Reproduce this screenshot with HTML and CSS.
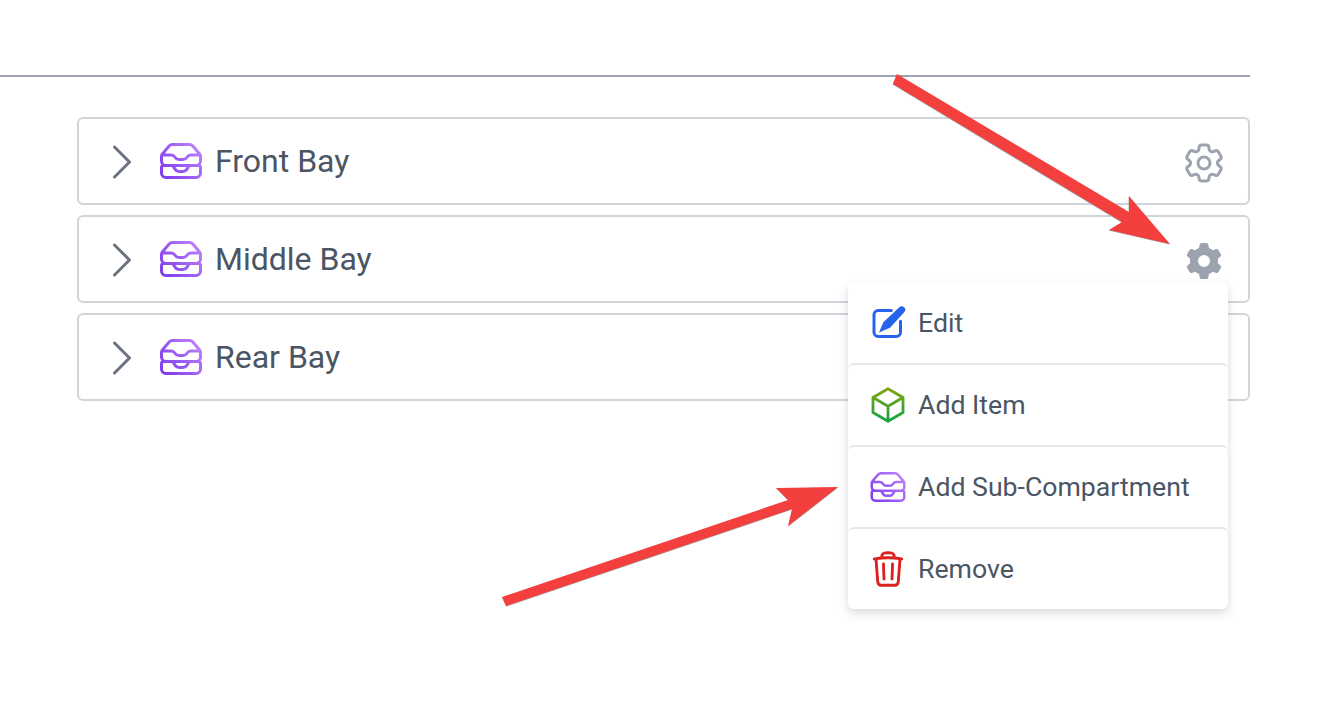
FILE: index.html
```html
<!DOCTYPE html>
<html lang="en">

<head>
    <meta charset="UTF-8">
    <meta name="viewport" content="width=device-width, initial-scale=1.0">
    <title>Compartments</title>
    <link rel="stylesheet" href="styles.css">
</head>

<body>
    <svg width="0" height="0" class="defs">
        <defs>
            <linearGradient id="purple2" gradientUnits="userSpaceOnUse" x1="2" y1="20" x2="22" y2="4">
                <stop offset="0" stop-color="#7c3aed"></stop>
                <stop offset="1" stop-color="#c084fc"></stop>
            </linearGradient>
            <linearGradient id="green" gradientUnits="userSpaceOnUse" x1="12" y1="2" x2="12" y2="22">
                <stop offset="0" stop-color="#84a50c"></stop>
                <stop offset="1" stop-color="#16a34a"></stop>
            </linearGradient>
            <symbol id="chevron" viewBox="0 0 24 24">
                <path fill="none" stroke="currentColor" stroke-width="1.5" stroke-linecap="round" stroke-linejoin="round" d="M8.25 4.5l7.5 7.5-7.5 7.5"></path>
            </symbol>
            <symbol id="inbox" viewBox="0 0 24 24">
                <path fill="none" stroke="url(#purple2)" stroke-width="1.5" stroke-linecap="round" stroke-linejoin="round" d="M7.875 14.25l1.214 1.942a2.25 2.25 0 001.908 1.058h2.006c.776 0 1.497-.4 1.908-1.058l1.214-1.942M2.41 9h4.636a2.25 2.25 0 011.872 1.002l.164.246a2.25 2.25 0 001.872 1.002h2.092a2.25 2.25 0 001.872-1.002l.164-.246A2.25 2.25 0 0116.954 9h4.636M2.41 9a2.25 2.25 0 00-.16.832V12a2.25 2.25 0 002.25 2.25h15A2.25 2.25 0 0021.75 12V9.832c0-.287-.055-.57-.16-.832M2.41 9a2.25 2.25 0 01.382-.632l3.285-3.832a2.25 2.25 0 011.708-.786h8.43c.657 0 1.281.287 1.709.786l3.284 3.832c.163.19.291.404.382.632M4.5 20.25h15A2.25 2.25 0 0021.75 18v-2.625c0-.621-.504-1.125-1.125-1.125H3.375c-.621 0-1.125.504-1.125 1.125V18a2.25 2.25 0 002.25 2.25z"></path>
            </symbol>
            <symbol id="cog" viewBox="0 0 24 24">
                <g fill="none" stroke="currentColor" stroke-width="1.5" stroke-linecap="round" stroke-linejoin="round">
                    <path d="M9.594 3.94c.09-.542.56-.94 1.11-.94h2.593c.55 0 1.02.398 1.11.94l.213 1.281c.063.374.313.686.645.87.074.04.147.083.22.127.324.196.72.257 1.075.124l1.217-.456a1.125 1.125 0 011.37.49l1.296 2.247a1.125 1.125 0 01-.26 1.431l-1.003.827c-.293.24-.438.613-.431.992a6.759 6.759 0 010 .255c-.007.378.138.75.43.99l1.005.828c.424.35.534.954.26 1.43l-1.298 2.247a1.125 1.125 0 01-1.369.491l-1.217-.456c-.355-.133-.75-.072-1.076.124a6.57 6.57 0 01-.22.128c-.331.183-.581.495-.644.869l-.213 1.28c-.09.543-.56.941-1.11.941h-2.594c-.55 0-1.02-.398-1.11-.94l-.213-1.281c-.062-.374-.312-.686-.644-.87a6.52 6.52 0 01-.22-.127c-.325-.196-.72-.257-1.076-.124l-1.217.456a1.125 1.125 0 01-1.369-.49l-1.297-2.247a1.125 1.125 0 01.26-1.431l1.004-.827c.292-.24.437-.613.43-.992a6.932 6.932 0 010-.255c.007-.378-.138-.75-.43-.99l-1.004-.828a1.125 1.125 0 01-.26-1.43l1.297-2.247a1.125 1.125 0 011.37-.491l1.216.456c.356.133.751.072 1.076-.124.072-.044.146-.087.22-.128.332-.183.582-.495.644-.869l.214-1.281z"></path>
                    <path d="M15 12a3 3 0 11-6 0 3 3 0 016 0z"></path>
                </g>
            </symbol>
            <symbol id="cog-solid" viewBox="0 0 20 20">
                <path fill="currentColor" fill-rule="evenodd" clip-rule="evenodd" d="M7.84 1.804A1 1 0 018.82 1h2.36a1 1 0 01.98.804l.331 1.652a6.993 6.993 0 011.929 1.115l1.598-.54a1 1 0 011.186.447l1.18 2.044a1 1 0 01-.205 1.251l-1.267 1.113a7.047 7.047 0 010 2.228l1.267 1.113a1 1 0 01.206 1.25l-1.18 2.045a1 1 0 01-1.187.447l-1.598-.54a6.993 6.993 0 01-1.929 1.115l-.33 1.652a1 1 0 01-.98.804H8.82a1 1 0 01-.98-.804l-.331-1.652a6.993 6.993 0 01-1.929-1.115l-1.598.54a1 1 0 01-1.186-.447l-1.18-2.044a1 1 0 01.205-1.251l1.267-1.114a7.05 7.05 0 010-2.227L1.821 7.773a1 1 0 01-.206-1.25l1.18-2.045a1 1 0 011.187-.447l1.598.54A6.993 6.993 0 017.51 3.456l.33-1.652zM10 13a3 3 0 100-6 3 3 0 000 6z"></path>
            </symbol>
        </defs>
    </svg>

    <div class="page">
        <div class="top-rule"></div>

        <ul class="bays">
            <li class="bay">
                <svg class="icon-lg chevron"><use href="#chevron"></use></svg>
                <svg class="icon-lg inbox"><use href="#inbox"></use></svg>
                <span class="bay-name">Front Bay</span>
                <span class="gear"><svg class="icon-lg"><use href="#cog"></use></svg></span>
            </li>
            <li class="bay">
                <svg class="icon-lg chevron"><use href="#chevron"></use></svg>
                <svg class="icon-lg inbox"><use href="#inbox"></use></svg>
                <span class="bay-name">Middle Bay</span>
                <span class="gear"><svg class="icon-solid"><use href="#cog-solid"></use></svg></span>
            </li>
            <li class="bay">
                <svg class="icon-lg chevron"><use href="#chevron"></use></svg>
                <svg class="icon-lg inbox"><use href="#inbox"></use></svg>
                <span class="bay-name">Rear Bay</span>
            </li>
        </ul>
    </div>

    <!-- dropdown of the Middle Bay gear -->
    <div class="menu">
        <div class="menu-item">
            <svg class="icon-md" viewBox="0 0 24 24">
                <path fill="none" stroke="#2563eb" stroke-width="1.8" stroke-linecap="round" d="M19.5 11V17.6a2.5 2.5 0 01-2.5 2.5H6.1a2.5 2.5 0 01-2.5-2.5V7a2.5 2.5 0 012.5-2.5H14"></path>
                <path fill="#2563eb" d="M6.6 17.7L9.2 11.6L18.8 2.6a2 2 0 012.9 2.9L13.2 14.9z"></path>
            </svg>
            <span>Edit</span>
        </div>
        <div class="menu-item">
            <svg class="icon-md" viewBox="0 0 24 24">
                <path fill="none" stroke="url(#green)" stroke-width="1.7" stroke-linecap="round" stroke-linejoin="round" d="M21 7.5l-9-5.25L3 7.5m18 0l-9 5.25m9-5.25v9l-9 5.25M3 7.5l9 5.25M3 7.5v9l9 5.25m0-9v9"></path>
            </svg>
            <span>Add Item</span>
        </div>
        <div class="menu-item">
            <svg class="icon-md"><use href="#inbox"></use></svg>
            <span>Add Sub-Compartment</span>
        </div>
        <div class="menu-item">
            <svg class="icon-md" viewBox="0 0 24 24">
                <path fill="none" stroke="#dc1f1f" stroke-width="1.7" stroke-linecap="round" stroke-linejoin="round" d="M14.74 9l-.346 9m-4.788 0L9.26 9m9.968-3.21c.342.052.682.107 1.022.166m-1.022-.165L18.16 19.673a2.25 2.25 0 01-2.244 2.077H8.084a2.25 2.25 0 01-2.244-2.077L4.772 5.79m14.456 0a48.108 48.108 0 00-3.478-.397m-12 .562c.34-.059.68-.114 1.022-.165m0 0a48.11 48.11 0 013.478-.397m7.5 0v-.916c0-1.18-.91-2.164-2.09-2.201a51.964 51.964 0 00-3.32 0c-1.18.037-2.09 1.022-2.09 2.201v.916m7.5 0a48.667 48.667 0 00-7.5 0"></path>
            </svg>
            <span>Remove</span>
        </div>
    </div>

    <!-- annotation arrows drawn over the screenshot -->
    <svg class="arrows" width="1321" height="716" viewBox="0 0 1321 716">
        <polygon class="arrow-edge" points="897,74 1129,212 1129,196 1170,244 1109,230 1122,222 893,84" transform="translate(-0.4 0.6)"></polygon>
        <polygon points="897,74 1129,212 1129,196 1170,244 1109,230 1122,222 893,84"></polygon>
        <polygon class="arrow-edge" points="502,597 788,500 776,488 838,487 788,526 792,509 506,606" transform="translate(0.2 0.6)"></polygon>
        <polygon points="502,597 788,500 776,488 838,487 788,526 792,509 506,606"></polygon>
    </svg>
</body>

</html>
```

FILE: styles.css
```css
* {
    box-sizing: border-box;
}

html,
body {
    min-height: 716px;
}

body {
    position: relative;
    margin: 0;
    background: #fff;
    color: #4b5563;
    font-family: Roboto, "Liberation Sans", sans-serif;
}

.defs {
    position: absolute;
}

.page {
    width: 1250px;
    padding-top: 75px;
}

.top-rule {
    height: 2px;
    background: #9ca3af;
}

.bays {
    list-style: none;
    margin: 40px 0 0 77px;
    padding: 0;
    display: flex;
    flex-direction: column;
    gap: 10px;
}

.bay {
    height: 88px;
    display: flex;
    align-items: center;
    gap: 11px;
    padding: 0 20px 0 19px;
    border: 2px solid #d1d5db;
    border-radius: 6px;
}

.bay-name {
    flex: 1;
    margin-left: -1px;
    font-size: 32px;
}

.icon-lg {
    width: 48px;
    height: 48px;
    flex: none;
}

.icon-md {
    width: 40px;
    height: 40px;
    flex: none;
}

.icon-solid {
    width: 40px;
    height: 40px;
}

.chevron {
    margin-top: 2px;
    color: #6b7280;
}

.gear {
    width: 48px;
    height: 48px;
    margin-top: 3px;
    display: flex;
    align-items: center;
    justify-content: center;
    color: #9ca3af;
}

.menu {
    position: absolute;
    top: 283px;
    left: 848px;
    z-index: 2;
    width: 380px;
    background: #fff;
    border-radius: 6px;
    box-shadow: 0 4px 10px rgba(75, 85, 99, 0.22);
}

.menu-item {
    height: 82px;
    display: flex;
    align-items: center;
    gap: 10px;
    padding-left: 20px;
    font-size: 26.67px;
    border-top: 2px solid #e5e7eb;
    border-radius: 6px;
}

.menu-item:first-child {
    height: 80px;
    border-top: 0;
}

.arrows {
    position: absolute;
    top: 0;
    left: 0;
    z-index: 3;
    fill: #f43f3f;
}

.arrow-edge {
    fill: #a0a0a0;
}
```
